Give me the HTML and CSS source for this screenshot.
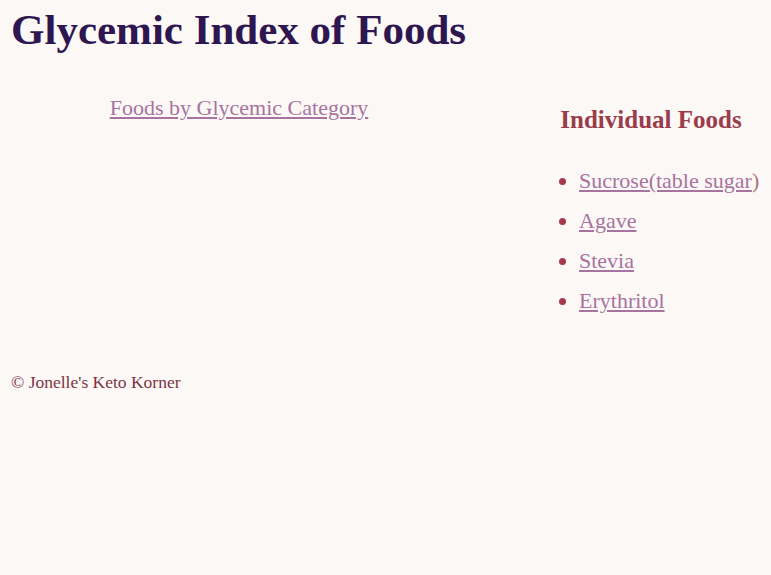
FILE: index.html
```html
<!DOCTYPE html>
<html lang="en">
<head>
<meta charset="utf-8">
<title>Glycemic Index of Foods</title>
<link rel="stylesheet" href="styles.css">
</head>
<body>
<h1 class="title">Glycemic Index of Foods</h1>
<div class="columns">
  <div class="main-col">
    <a class="link" href="#">Foods by Glycemic Category</a>
  </div>
  <aside class="side-col">
    <h3 class="side-title">Individual Foods</h3>
    <ul class="food-list">
      <li><a class="link" href="#">Sucrose(table sugar</a>)</li>
      <li><a class="link" href="#">Agave</a></li>
      <li><a class="link" href="#">Stevia</a></li>
      <li><a class="link" href="#">Erythritol</a></li>
    </ul>
  </aside>
</div>
<footer class="footer">© Jonelle's Keto Korner</footer>
</body>
</html>
```
FILE: styles.css
```css
html, body {
  background: #fcf8f6;
}
body {
  margin: 0 8px;
  font-family: "Liberation Serif", "Times New Roman", serif;
  font-size: 22px;
  color: #8a3444;
  overflow: hidden;
}
.title {
  margin: 6px 0 0;
  padding-left: 3px;
  font-size: 43px;
  line-height: 48px;
  color: #2e1650;
  font-weight: bold;
}
.columns {
  display: grid;
  grid-template-columns: 462px 1fr;
  column-gap: 69px;
  margin-top: 41px;
}
.main-col {
  text-align: center;
}
.link {
  color: #a7739f;
  text-decoration: underline;
}
.side-col {
  padding-top: 10px;
}
.side-title {
  margin: 0;
  text-align: center;
  font-size: 25px;
  line-height: 30px;
  color: #9a3c4a;
}
.food-list {
  margin: 33px 0 0;
  padding-left: 40px;
  white-space: nowrap;
  color: #a8747a;
}
.food-list li {
  line-height: 26px;
  margin-bottom: 14px;
}
.food-list li::marker {
  color: #a33a4c;
}
.footer {
  margin-top: 44px;
  padding-left: 3px;
  font-size: 17.5px;
  color: #7e3444;
}
```
